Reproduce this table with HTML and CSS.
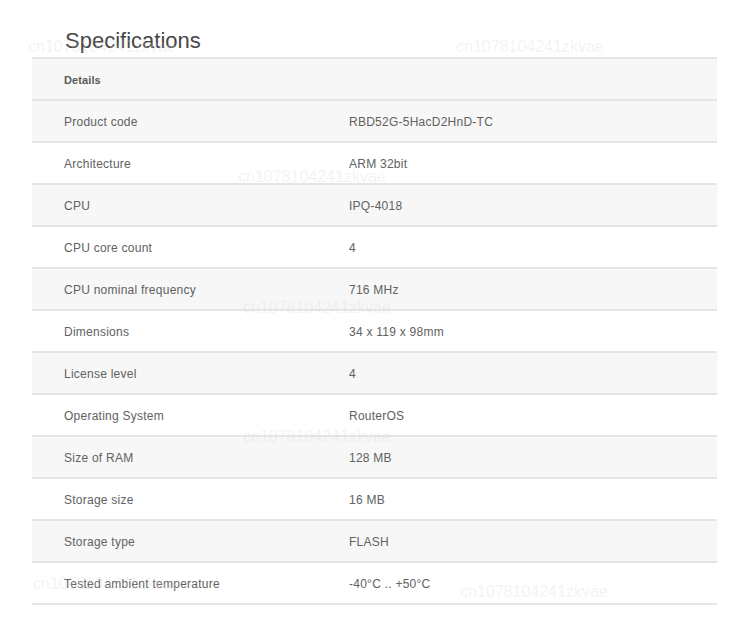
FILE: index.html
```html
<!DOCTYPE html>
<html>
<head>
<meta charset="utf-8">
<link rel="stylesheet" href="styles.css">
</head>
<body>
<div class="page">
  <h2 class="title">Specifications</h2>
  <div class="specs">
    <div class="row head"><div class="cell">Details</div><div class="cell"></div></div>
    <div class="row alt"><div class="cell">Product code</div><div class="cell">RBD52G-5HacD2HnD-TC</div></div>
    <div class="row"><div class="cell">Architecture</div><div class="cell">ARM 32bit</div></div>
    <div class="row alt"><div class="cell">CPU</div><div class="cell">IPQ-4018</div></div>
    <div class="row"><div class="cell">CPU core count</div><div class="cell">4</div></div>
    <div class="row alt"><div class="cell">CPU nominal frequency</div><div class="cell">716 MHz</div></div>
    <div class="row"><div class="cell">Dimensions</div><div class="cell">34 x 119 x 98mm</div></div>
    <div class="row alt"><div class="cell">License level</div><div class="cell">4</div></div>
    <div class="row"><div class="cell">Operating System</div><div class="cell">RouterOS</div></div>
    <div class="row alt"><div class="cell">Size of RAM</div><div class="cell">128 MB</div></div>
    <div class="row"><div class="cell">Storage size</div><div class="cell">16 MB</div></div>
    <div class="row alt"><div class="cell">Storage type</div><div class="cell">FLASH</div></div>
    <div class="row"><div class="cell">Tested ambient temperature</div><div class="cell">-40°C .. +50°C</div></div>
  </div>
  <span class="wm wm1">cn1078104241zkvae</span>
  <span class="wm wm2">cn1078104241zkvae</span>
  <span class="wm wm3">cn1078104241zkvae</span>
  <span class="wm wm4">cn1078104241zkvae</span>
  <span class="wm wm5">cn1078104241zkvae</span>
  <span class="wm wm6">cn1078104241zkvae</span>
  <span class="wm wm7">cn1078104241zkvae</span>
</div>
</body>
</html>
```

FILE: styles.css
```css
html, body {
  margin: 0;
  padding: 0;
  background: #ffffff;
}
.page {
  position: relative;
  width: 685px;
  padding: 28px 0 0 32px;
  font-family: "Liberation Sans", Arial, sans-serif;
  color: #555;
}
.title {
  margin: 0 0 3px 33px;
  font-size: 22px;
  line-height: 26px;
  font-weight: normal;
  color: #474747;
}
.specs {
  border-top: 2px solid #e5e5e5;
}
.row {
  display: grid;
  grid-template-columns: 285px 1fr;
  height: 40px;
  border-bottom: 2px solid #e5e5e5;
  background: #ffffff;
}
.row.alt, .row.head {
  background: #f7f7f7;
}
.cell {
  padding: 1px 0 0 32px;
  font-size: 12px;
  line-height: 40px;
  color: #616161;
  letter-spacing: 0.25px;
}
.head .cell {
  font-size: 11px;
  font-weight: bold;
  color: #5a5a5a;
  letter-spacing: 0.1px;
}
.wm {
  position: absolute;
  font-family: "Liberation Sans", Arial, sans-serif;
  font-size: 16px;
  color: rgba(215, 215, 215, 0.3);
  white-space: nowrap;
  pointer-events: none;
}
.wm1 { left: 28px; top: 38px; }
.wm2 { left: 456px; top: 38px; }
.wm3 { left: 238px; top: 168px; }
.wm4 { left: 243px; top: 299px; }
.wm5 { left: 243px; top: 428px; }
.wm6 { left: 33px; top: 575px; }
.wm7 { left: 460px; top: 583px; }
```
